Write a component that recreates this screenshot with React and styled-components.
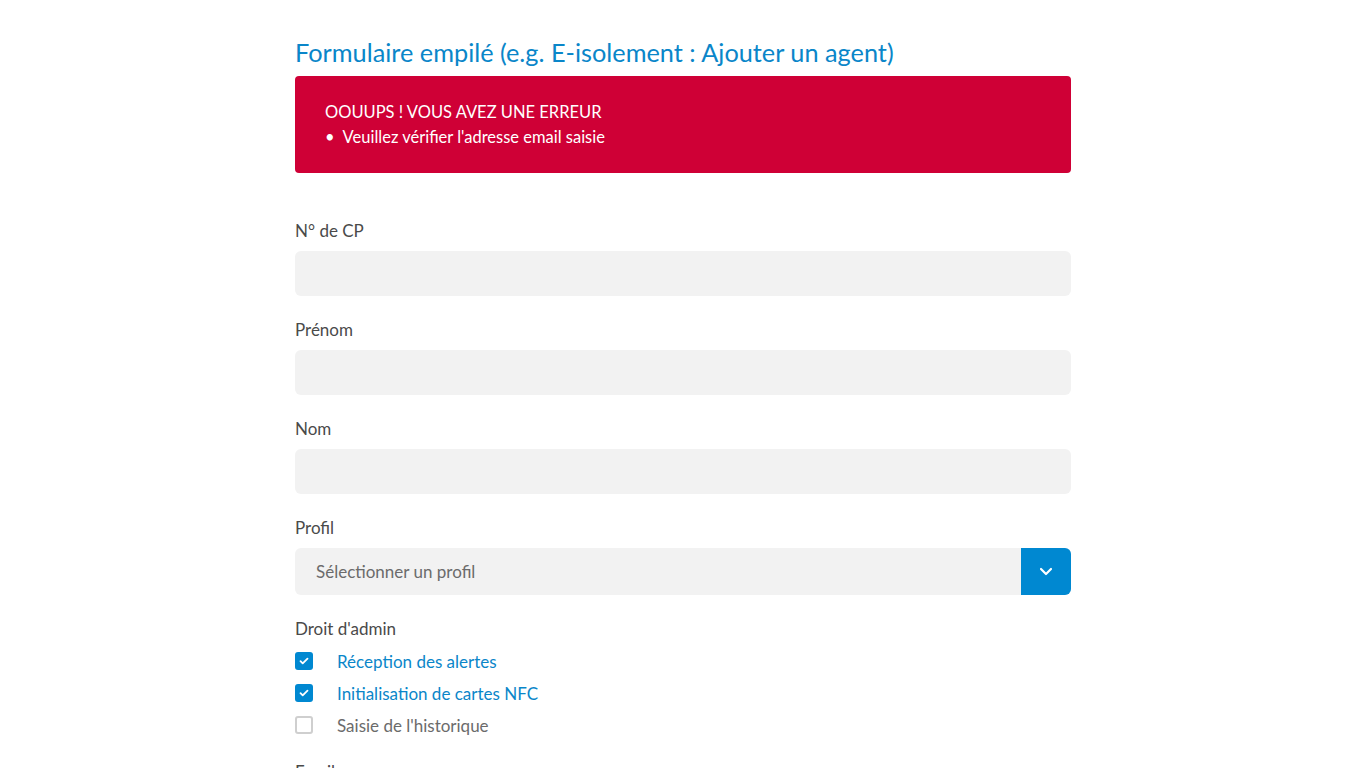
import React, { useState } from "react";
import styled, { createGlobalStyle } from "styled-components";

const GlobalStyle = createGlobalStyle`
  body {
    margin: 0;
    background: #ffffff;
    font-family: Lato, "Noto Sans", sans-serif;
  }
`;

const Page = styled.div`
  width: 776px;
  margin: 0 auto;
  padding-top: 35px;
`;

const Title = styled.h2`
  margin: 0 0 7px;
  font-size: 25.3px;
  line-height: 34px;
  font-weight: 400;
  color: #0a86c9;
`;

const ErrorBox = styled.div`
  background: #cf0036;
  color: #ffffff;
  border-radius: 4px;
  padding: 24px 30px 22px;
  height: 97px;
  box-sizing: border-box;
  margin-bottom: 46px;
`;

const ErrorTitle = styled.div`
  font-size: 16.5px;
  line-height: 25px;
  text-transform: uppercase;
`;

const ErrorItem = styled.div`
  font-size: 16.5px;
  line-height: 25px;
  &::before {
    content: "•";
    margin-right: 8px;
  }
`;

const Field = styled.div`
  margin-bottom: ${(p) => p.$gap || 22}px;
`;

const Label = styled.div`
  font-size: 17px;
  line-height: 24px;
  color: #4a4a4a;
  margin-bottom: 8px;
`;

const Input = styled.input`
  display: block;
  width: 100%;
  height: 45px;
  box-sizing: border-box;
  border: none;
  border-radius: 6px;
  background: #f2f2f2;
  padding: 0 20px;
  font: inherit;
  font-size: 17px;
  outline: none;
`;

const Select = styled.div`
  display: flex;
  height: 47px;
  border-radius: 6px;
  background: #f2f2f2;
  overflow: hidden;
`;

const SelectText = styled.div`
  flex: 1;
  display: flex;
  align-items: center;
  padding-left: 21px;
  font-size: 17px;
  color: #6b6b6b;
`;

const SelectButton = styled.div`
  width: 50px;
  background: #0088d1;
  display: flex;
  align-items: center;
  justify-content: center;
`;

const CheckList = styled.div`
  display: flex;
  flex-direction: column;
  gap: 14px;
  margin-top: 11px;
`;

const CheckRow = styled.label`
  display: flex;
  align-items: center;
  gap: 24px;
  cursor: pointer;
  height: 18px;
`;

const Box = styled.span`
  width: 18px;
  height: 18px;
  box-sizing: border-box;
  border-radius: 3px;
  display: flex;
  align-items: center;
  justify-content: center;
  background: ${(p) => (p.$checked ? "#0088d1" : "#ffffff")};
  border: ${(p) => (p.$checked ? "none" : "2px solid #cfcfcf")};
`;

const CheckText = styled.span`
  font-size: 17px;
  color: ${(p) => (p.$checked ? "#0a86c9" : "#6b6b6b")};
`;

const fields = ["N° de CP", "Prénom", "Nom"];

const App = () => {
  const [rights, setRights] = useState([
    { label: "Réception des alertes", checked: true },
    { label: "Initialisation de cartes NFC", checked: true },
    { label: "Saisie de l'historique", checked: false },
  ]);

  const toggle = (i) =>
    setRights((r) => r.map((x, j) => (j === i ? { ...x, checked: !x.checked } : x)));

  return (
    <>
      <GlobalStyle />
      <Page>
        <Title>Formulaire empilé (e.g. E-isolement : Ajouter un agent)</Title>
        <ErrorBox>
          <ErrorTitle>Oouups ! Vous avez une erreur</ErrorTitle>
          <ErrorItem>Veuillez vérifier l'adresse email saisie</ErrorItem>
        </ErrorBox>

        {fields.map((f) => (
          <Field key={f}>
            <Label>{f}</Label>
            <Input />
          </Field>
        ))}

        <Field>
          <Label>Profil</Label>
          <Select>
            <SelectText>Sélectionner un profil</SelectText>
            <SelectButton>
              <svg width="14" height="9" viewBox="0 0 14 9">
                <path d="M2 2l5 5 5-5" fill="none" stroke="#fff" strokeWidth="2.2" strokeLinecap="round" strokeLinejoin="round" />
              </svg>
            </SelectButton>
          </Select>
        </Field>

        <Field $gap={26}>
          <Label>Droit d'admin</Label>
          <CheckList>
            {rights.map((r, i) => (
              <CheckRow key={r.label} onClick={() => toggle(i)}>
                <Box $checked={r.checked}>
                  {r.checked && (
                    <svg width="10" height="8" viewBox="0 0 10 8">
                      <path d="M1.5 4.2l2.2 2.2L8.5 1.6" fill="none" stroke="#fff" strokeWidth="1.8" strokeLinecap="round" strokeLinejoin="round" />
                    </svg>
                  )}
                </Box>
                <CheckText $checked={r.checked}>{r.label}</CheckText>
              </CheckRow>
            ))}
          </CheckList>
        </Field>

        <Field>
          <Label>Email</Label>
          <Input />
        </Field>
      </Page>
    </>
  );
};

export default App;
